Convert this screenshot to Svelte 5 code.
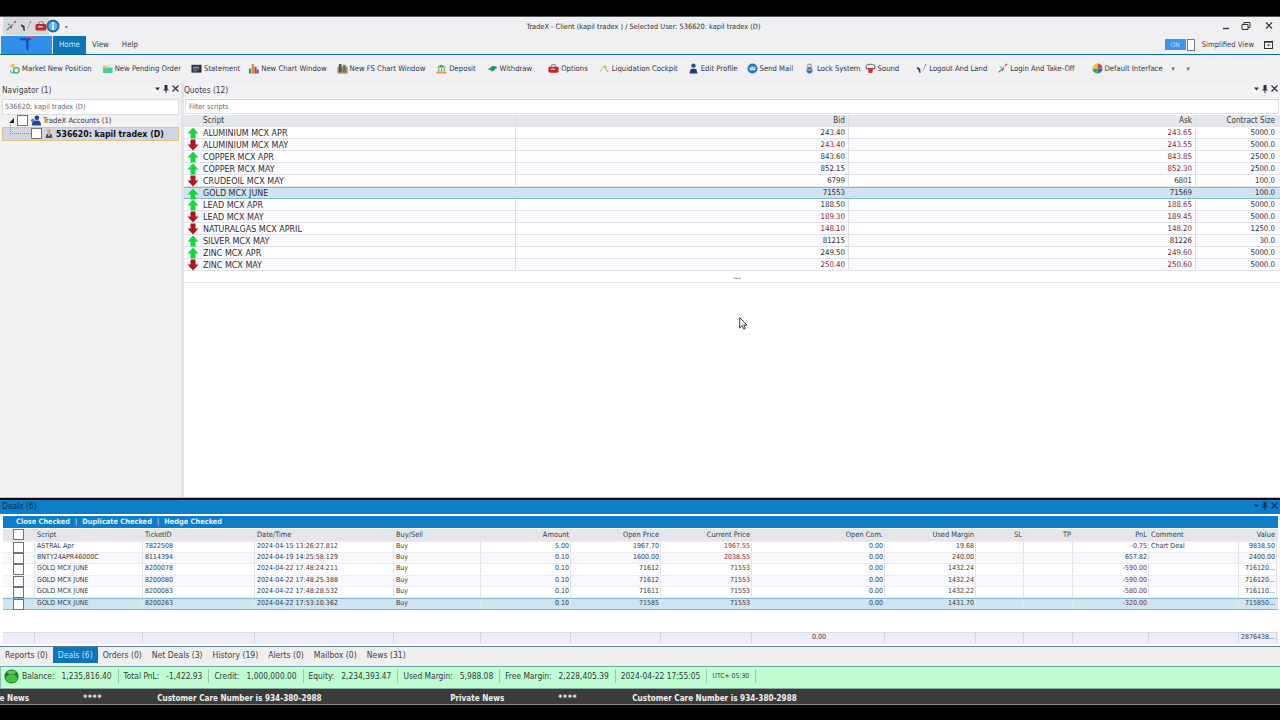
<script>
  const tools = [
    { icon: 'market', label: 'Market New Position', gap: 10 },
    { icon: 'pending', label: 'New Pending Order', gap: 10 },
    { icon: 'statement', label: 'Statement', gap: 8 },
    { icon: 'chart', label: 'New Chart Window', gap: 10 },
    { icon: 'fschart', label: 'New FS Chart Window', gap: 11 },
    { icon: 'deposit', label: 'Deposit', gap: 11 },
    { icon: 'withdraw', label: 'Withdraw', gap: 16 },
    { icon: 'options', label: 'Options', gap: 11 },
    { icon: 'liquid', label: 'Liquidation Cockpit', gap: 10 },
    { icon: 'profile', label: 'Edit Profile', gap: 9 },
    { icon: 'mail', label: 'Send Mail', gap: 11 },
    { icon: 'lock', label: 'Lock System', gap: 4 },
    { icon: 'sound', label: 'Sound', gap: 17 },
    { icon: 'land', label: 'Logout And Land', gap: 10 },
    { icon: 'takeoff', label: 'Login And Take-Off', gap: 17 },
    { icon: 'palette', label: 'Default Interface', gap: 0 }
  ];

  const quotes = [
    { name: 'ALUMINIUM MCX APR', bid: '243.40', ask: '243.65', size: '5000.0', up: true },
    { name: 'ALUMINIUM MCX MAY', bid: '243.40', ask: '243.55', size: '5000.0', up: false, bidRed: true },
    { name: 'COPPER MCX APR', bid: '843.60', ask: '843.85', size: '2500.0', up: true },
    { name: 'COPPER MCX MAY', bid: '852.15', ask: '852.30', size: '2500.0', up: true },
    { name: 'CRUDEOIL MCX MAY', bid: '6799', ask: '6801', size: '100.0', up: false, plain: true },
    { name: 'GOLD MCX JUNE', bid: '71553', ask: '71569', size: '100.0', up: true, plain: true, selected: true },
    { name: 'LEAD MCX APR', bid: '188.50', ask: '188.65', size: '5000.0', up: true },
    { name: 'LEAD MCX MAY', bid: '189.30', ask: '189.45', size: '5000.0', up: false, bidRed: true },
    { name: 'NATURALGAS MCX APRIL', bid: '148.10', ask: '148.20', size: '1250.0', up: false, bidRed: true },
    { name: 'SILVER MCX MAY', bid: '81215', ask: '81226', size: '30.0', up: true, plain: true },
    { name: 'ZINC MCX APR', bid: '249.50', ask: '249.60', size: '5000.0', up: true },
    { name: 'ZINC MCX MAY', bid: '250.40', ask: '250.60', size: '5000.0', up: false, bidRed: true }
  ];

  const dealHead = ['Script', 'TicketID', 'Date/Time', 'Buy/Sell', 'Amount', 'Open Price', 'Current Price', 'Open Com.', 'Used Margin', 'SL', 'TP', 'PnL', 'Comment', 'Value'];
  const alignRight = [false, false, false, false, true, true, true, true, true, true, true, true, false, true];

  const deals = [
    { cells: ['ASTRAL Apr', '7822508', '2024-04-15 13:26:27.812', 'Buy', '5.00', '1967.70', '1967.55', '0.00', '19.68', '', '', '-0.75', 'Chart Deal', '9838.50'], curRed: true },
    { cells: ['BNTY24APR46000C', '8114394', '2024-04-19 14:25:58.129', 'Buy', '0.10', '1600.00', '2038.55', '0.00', '240.00', '', '', '657.82', '', '2400.00'], curRed: true, pnlDark: true },
    { cells: ['GOLD MCX JUNE', '8200078', '2024-04-22 17:48:24.211', 'Buy', '0.10', '71612', '71553', '0.00', '1432.24', '', '', '-590.00', '', '716120...'] },
    { cells: ['GOLD MCX JUNE', '8200080', '2024-04-22 17:48:25.388', 'Buy', '0.10', '71612', '71553', '0.00', '1432.24', '', '', '-590.00', '', '716120...'] },
    { cells: ['GOLD MCX JUNE', '8200083', '2024-04-22 17:48:28.532', 'Buy', '0.10', '71611', '71553', '0.00', '1432.22', '', '', '-580.00', '', '716110...'] },
    { cells: ['GOLD MCX JUNE', '8200263', '2024-04-22 17:53:10.362', 'Buy', '0.10', '71585', '71553', '0.00', '1431.70', '', '', '-320.00', '', '715850...'], selected: true }
  ];

  const tabs = ['Reports (0)', 'Deals (6)', 'Orders (0)', 'Net Deals (3)', 'History (19)', 'Alerts (0)', 'Mailbox (0)', 'News (31)'];

  const stats = [
    ['Balance:', '1,235,816.40'],
    ['Total PnL:', '-1,422.93'],
    ['Credit:', '1,000,000.00'],
    ['Equity:', '2,234,393.47'],
    ['Used Margin:', '5,988.08'],
    ['Free Margin:', '2,228,405.39']
  ];
</script>

{#snippet icon(name)}
  <svg class="ico" viewBox="0 0 12 12" aria-hidden="true">
    {#if name === 'market'}
      <circle cx="4" cy="3" r="2.4" fill="#e8c64a" />
      <path d="M1.5 8a4 4 0 0 0 4 3" fill="none" stroke="#4aa0d8" stroke-width="1.2" />
      <circle cx="8" cy="8" r="3" fill="none" stroke="#35b36a" stroke-width="1.5" />
    {:else if name === 'pending'}
      <rect x="1" y="5" width="10.5" height="6" fill="#3fcfa6" />
      <rect x="1" y="3" width="5" height="3" fill="#e8c64a" />
      <rect x="7" y="1.5" width="2" height="3" fill="#d8d8d8" />
    {:else if name === 'statement'}
      <rect x="0.5" y="2" width="11" height="8.5" fill="#2c3038" />
      <rect x="2" y="4" width="7" height="1" fill="#b8c0c8" />
      <rect x="2" y="6" width="7" height="1" fill="#8a96a2" />
      <rect x="2" y="8" width="5" height="1" fill="#8a96a2" />
    {:else if name === 'chart'}
      <rect x="1" y="6" width="2.4" height="5.5" fill="#3d9a3f" />
      <rect x="4" y="1" width="2.4" height="10.5" fill="#d8842c" />
      <rect x="7" y="4" width="2.4" height="7.5" fill="#c33b35" />
      <rect x="9.6" y="7" width="2" height="4.5" fill="#3569b8" />
    {:else if name === 'fschart'}
      <rect x="0.5" y="4" width="11" height="7.5" fill="#a08b6a" />
      <rect x="2" y="1" width="3" height="9" fill="#5d5a4c" />
      <rect x="6.5" y="2" width="3" height="8" fill="#6f7a5a" />
    {:else if name === 'deposit'}
      <path d="M0.5 5 6 1.5 11 5Z" fill="#3fa650" />
      <rect x="1.5" y="5.5" width="9" height="4" fill="#e8edf0" />
      <path d="M3 5.5v4M6 5.5v4M9 5.5v4" stroke="#5b9a68" />
      <rect x="0.5" y="9.5" width="11" height="2" fill="#d8a23a" />
    {:else if name === 'withdraw'}
      <path d="M1 7 6 3l5 1-4 5Z" fill="#2f9a70" />
      <path d="M5 9l3-4 3 .5" fill="none" stroke="#1f6d55" />
    {:else if name === 'options'}
      <path d="M3.5 4a2.5 2.5 0 0 1 5 0" fill="none" stroke="#8a8f98" stroke-width="1.2" />
      <rect x="0.5" y="4" width="11" height="6.5" rx="1.5" fill="#c4242a" />
      <rect x="3" y="6" width="5" height="1.5" fill="#f3b9b9" />
    {:else if name === 'liquid'}
      <path d="M1 10 5 3" stroke="#e8d27a" stroke-width="1.6" />
      <path d="M5 3l5 7" stroke="#9fd08a" stroke-width="1.6" />
      <path d="M6.8 3l1.5 2" stroke="#e59a4a" stroke-width="1.3" />
    {:else if name === 'profile'}
      <circle cx="6" cy="3" r="2.4" fill="#1f4fa8" />
      <path d="M1.5 11.5 3 6.5h6l1.5 5Z" fill="#173d88" />
      <rect x="4.5" y="5" width="3" height="1.5" fill="#e8b86a" />
    {:else if name === 'mail'}
      <circle cx="6" cy="6" r="5.5" fill="#1f7cc0" />
      <rect x="3" y="4" width="6" height="4" rx="0.6" fill="#e6f2fa" />
      <path d="M3 4.4 6 6.4 9 4.4" fill="none" stroke="#1f7cc0" stroke-width="0.7" />
    {:else if name === 'lock'}
      <circle cx="6" cy="3.2" r="2" fill="none" stroke="#7d8a99" stroke-width="1.1" />
      <circle cx="6" cy="8" r="3.4" fill="#4f6f96" />
      <rect x="3.2" y="7" width="5.6" height="1" fill="#c9d4e0" />
    {:else if name === 'sound'}
      <ellipse cx="6" cy="4" rx="5" ry="2.6" fill="none" stroke="#555" />
      <path d="M3 5.5h6l-1 5.5H4Z" fill="#c83a3a" />
      <path d="M1.5 5v2M10.5 5v2" stroke="#555" />
    {:else if name === 'land'}
      <path d="M1 4l3.5 2 .5 5-1.5-.3-.8-3L1 6Z" fill="#3c4650" />
      <path d="M7.5 9 10.5 2" stroke="#9aa4ae" stroke-width="1" />
      <path d="M10 1.5l1 .5" stroke="#c33b35" stroke-width="1.2" />
    {:else if name === 'takeoff'}
      <path d="M1 10 8 3.5 6.5 9 5 7.5 3 10Z" fill="#5f6b75" />
      <path d="M3 4l2 1" stroke="#3d9a3f" stroke-width="1.1" />
      <path d="M9 3 11 1" stroke="#c33b35" stroke-width="1.3" />
    {:else if name === 'palette'}
      <path d="M6 .5A5.5 5.5 0 0 1 11.5 6H6Z" fill="#e23b3b" />
      <path d="M11.5 6A5.5 5.5 0 0 1 6 11.5V6Z" fill="#2f68c8" />
      <path d="M6 11.5A5.5 5.5 0 0 1 .5 6H6Z" fill="#35a84a" />
      <path d="M.5 6A5.5 5.5 0 0 1 6 .5V6Z" fill="#eec52e" />
    {/if}
  </svg>
{/snippet}

{#snippet panelControls()}
  <span class="panel-controls">
    <svg viewBox="0 0 28 10" width="28" height="10" aria-hidden="true">
      <path d="M2 3.5h5L4.500 6.500Z" fill="currentColor" />
      <path d="M11.500 1h3v4.500h1.200v1h-2.200V9h-1V6.500h-2.200v-1h1.200Z" fill="currentColor" />
      <path d="M19.500 1.500l6 6m0-6-6 6" stroke="currentColor" stroke-width="1.200" />
    </svg>
  </span>
{/snippet}

{#snippet arrow(up)}
  <svg class="arrow" viewBox="0 0 12 12" aria-hidden="true">
    {#if up}
      <path d="M6 .5 11.5 6.5H8.5V11.5H3.5V6.5H.5Z" fill="#14d83c" />
    {:else}
      <path d="M6 11.5 .5 5.5H3.5V.5H8.5V5.5H11.5Z" fill="#b4141e" />
    {/if}
  </svg>
{/snippet}

<div class="screen">
  <div class="letterbox-top"></div>

  <header class="titlebar">
    <div class="qat">
      <span class="qat-group">
        {@render icon('takeoff')}
        {@render icon('land')}
        {@render icon('options')}
      </span>
      <svg class="info" viewBox="0 0 14 14" aria-hidden="true">
        <circle cx="7" cy="7" r="6.5" fill="#1569b8" />
        <circle cx="7" cy="7" r="4.6" fill="#5db0ea" />
        <rect x="6" y="5.6" width="2" height="5" fill="#fff" />
        <rect x="6" y="3.2" width="2" height="1.6" fill="#fff" />
      </svg>
      <span class="qat-more">▾</span>
    </div>
    <div class="title">TradeX - Client (kapil tradex ) / Selected User: 536620: kapil tradex (D)</div>
    <div class="window-buttons">
      <svg viewBox="0 0 52 10" width="52" height="10" aria-hidden="true">
        <path d="M0 7.5h6" stroke="#333" stroke-width="1.4" />
        <path d="M19 3.500h6v5h-6Z M21 3.500V1.500h6v5h-2" fill="none" stroke="#333" />
        <path d="M43 1.500l6 6m0-6-6 6" stroke="#333" stroke-width="1.200" />
      </svg>
    </div>
  </header>

  <nav class="ribbon-tabs">
    <div class="logo">
      <svg viewBox="0 0 51 16" width="51" height="16" aria-hidden="true">
        <path d="M18 2h13c-.5 1.500-1.500 2.500-3.500 2.500V15c-1.500-.5-2.500-2-2.500-4V4.500h-3.500C20 4.500 18.500 3.500 18 2Z" fill="#1551c4" />
        <path d="M27.500 0h6l-3 4Z" fill="#d8505e" />
      </svg>
    </div>
    <span class="tab-home">Home</span>
    <span class="tab-link">View</span>
    <span class="tab-link">Help</span>
    <div class="ribbon-right">
      <span class="toggle-on">ON</span>
      <span class="toggle-box"></span>
      <span class="simplified">Simplified View</span>
      <svg viewBox="0 0 10 10" width="10" height="10" aria-hidden="true">
        <rect x="0.500" y="1.500" width="8" height="7" fill="none" stroke="#333" />
        <path d="M.500 2h8" stroke="#333" stroke-width="1.400" />
        <path d="M3 4.500h3L4.500 6.500Z" fill="#333" />
      </svg>
    </div>
  </nav>

  <div class="toolbar">
    {#each tools as tool}
      <span class="tool" style="margin-right: {tool.gap}px">
        {@render icon(tool.icon)}
        <span>{tool.label}</span>
      </span>
    {/each}
    <span class="tool-caret first">▾</span>
    <span class="tool-caret">▾</span>
  </div>

  <main class="workspace">
    <aside class="navigator">
      <div class="panel-head">
        <span>Navigator (1)</span>
        {@render panelControls()}
      </div>
      <div class="nav-search">536620: kapil tradex (D)</div>
      <div class="tree-row">
        <span class="tree-toggle"></span>
        <span class="check"></span>
        <svg class="tree-icon" viewBox="0 0 12 12" aria-hidden="true">
          <circle cx="7.500" cy="3" r="2.500" fill="#1f3f94" />
          <path d="M2 11.500c0-4 2-5.500 5.500-5.500s4.500 2 4.500 5.500Z" fill="#23479e" />
          <circle cx="3" cy="6" r="1.800" fill="#3d7cc8" />
        </svg>
        <span>TradeX Accounts (1)</span>
      </div>
      <div class="tree-row selected">
        <span class="check"></span>
        <svg class="tree-icon" viewBox="0 0 12 12" aria-hidden="true">
          <circle cx="6" cy="3" r="2.500" fill="#d8a678" />
          <path d="M2 11.500c0-4 1.500-5.500 4-5.500s4 1.500 4 5.500Z" fill="#4a4f58" />
          <rect x="5.300" y="6" width="1.400" height="3" fill="#eee" />
        </svg>
        <span>536620: kapil tradex (D)</span>
      </div>
    </aside>

    <section class="quotes">
      <div class="panel-head">
        <span>Quotes (12)</span>
        {@render panelControls()}
      </div>
      <div class="filter">Filter scripts</div>
      <div class="q-row q-head">
        <span></span>
        <span>Script</span>
        <span class="num">Bid</span>
        <span class="num">Ask</span>
        <span class="num">Contract Size</span>
      </div>
      {#each quotes as quote, i}
        <div class="q-row" class:alt={i % 2 === 1} class:sel={quote.selected}>
          <span class="arrow-cell">{@render arrow(quote.up)}</span>
          <span class="q-name">{quote.name}</span>
          <span class="num" class:red={quote.bidRed}>{quote.bid}</span>
          <span class="num" class:red={!quote.plain}>{quote.ask}</span>
          <span class="num">{quote.size}</span>
        </div>
      {/each}
      <div class="more-dots">•••</div>
    </section>

    <svg class="cursor" viewBox="0 0 9 13" width="9" height="13" aria-hidden="true">
      <path d="M.7.700v10.200l2.500-2.300 1.700 3.500 1.500-.7-1.600-3.400h3.200Z" fill="#fff" stroke="#222" stroke-width=".9" />
    </svg>
  </main>

  <section class="deals">
    <div class="deals-title">
      <span>Deals (6)</span>
      {@render panelControls()}
    </div>
    <div class="deals-actions">
      <span>Close Checked</span><i>|</i><span>Duplicate Checked</span><i>|</i><span>Hedge Checked</span>
    </div>
    <div class="d-row d-head">
      <span class="check-cell"><span class="check"></span></span>
      {#each dealHead as text, i}
        <span class:num={alignRight[i]}>{text}</span>
      {/each}
    </div>
    {#each deals as deal, r}
      <div class="d-row" class:alt={r % 2 === 1} class:sel={deal.selected}>
        <span class="check-cell"><span class="check"></span></span>
        {#each deal.cells as text, i}
          <span
            class:num={alignRight[i]}
            class:red={(i === 6 && deal.curRed) || (i === 11 && !deal.pnlDark)}
          >{text}</span>
        {/each}
      </div>
    {/each}
    <div class="d-spacer"></div>
    <div class="d-row d-foot">
      <span></span>
      {#each dealHead as _, i}
        <span class:center={i === 7}>{i === 7 ? '0.00' : i === 13 ? '2876438...' : ''}</span>
      {/each}
    </div>
  </section>

  <div class="bottom-tabs">
    {#each tabs as tab, i}
      <span class="bottom-tab" class:active={i === 1}>{tab}</span>
    {/each}
  </div>

  <div class="statusbar">
    <svg class="orb" viewBox="0 0 16 16" aria-hidden="true">
      <circle cx="8" cy="8" r="7.500" fill="#1d7a2a" />
      <ellipse cx="8" cy="10" rx="6" ry="4.500" fill="#3fc23f" />
      <ellipse cx="8" cy="3.500" rx="4.500" ry="2" fill="#9adf9a" opacity=".6" />
    </svg>
    {#each stats as stat}
      <span class="stat"><span>{stat[0]}</span><span>{stat[1]}</span></span>
    {/each}
    <span class="stat">2024-04-22 17:55:05</span>
    <span class="stat utc">UTC+ 05:30</span>
  </div>

  <div class="ticker">
    <div class="ticker-track">
      {#each [0, 1] as _}
        <span class="t-news">Private News</span>
        <span class="t-stars">****</span>
        <span class="t-care">Customer Care Number is 934-380-2988</span>
      {/each}
    </div>
  </div>
</div>

<style>
  :global(body) {
    margin: 0;
    background: #000;
  }

  .screen {
    display: flex;
    flex-direction: column;
    width: 1280px;
    height: 720px;
    overflow: hidden;
    background: #000;
    color: #2a2a2e;
    font-family: "DejaVu Sans", "Noto Sans", sans-serif;
    font-stretch: condensed;
    font-size: 7.5px;
  }

  .letterbox-top {
    flex: 0 0 16px;
    background: #000;
  }

  .titlebar {
    position: relative;
    display: flex;
    flex: 0 0 20px;
    align-items: center;
    justify-content: center;
    box-sizing: border-box;
    padding: 0 0 1px 7px;
    background: #f0f0f3;
    border-top: 1px solid #55585c;
  }

  .qat {
    position: absolute;
    left: 3px;
    top: 0;
    display: flex;
    align-items: center;
  }

  .qat-group {
    display: flex;
    gap: 3px;
    padding: 3px 2px;
    background: #d9d9dd;
  }

  .qat-group .ico {
    width: 12px;
    height: 12px;
  }

  .info {
    width: 14px;
    height: 14px;
    margin-left: -3px;
  }

  .qat-more {
    margin-left: 5px;
    color: #777;
    font-size: 6px;
  }

  .title {
    font-size: 7.35px;
    color: #333;
  }

  .window-buttons {
    position: absolute;
    right: 5px;
    top: 4px;
  }

  .ribbon-tabs {
    display: flex;
    flex: 0 0 17.500px;
    align-items: stretch;
    box-sizing: border-box;
    padding-left: 1px;
    background: #f0f0f3;
    border-bottom: 1.500px solid #0d6c8e;
    font-size: 7.900px;
  }

  .logo {
    width: 51px;
    margin-right: 1px;
    overflow: hidden;
    background: #2f8fe8;
  }

  .tab-home {
    display: flex;
    align-items: center;
    justify-content: center;
    width: 33px;
    padding-bottom: 1px;
    background: #0d75b8;
    color: #d5e8f5;
  }

  .tab-link {
    display: flex;
    align-items: center;
    margin-left: 6px;
    margin-right: 7px;
    padding-bottom: 1px;
    color: #3a3d42;
  }

  .ribbon-right {
    display: flex;
    align-items: center;
    margin-left: auto;
    padding: 0 6px 1px 0;
  }

  .toggle-on {
    display: flex;
    align-items: center;
    justify-content: center;
    width: 21px;
    height: 11px;
    background: #3c96ee;
    color: #bcdcf8;
    font-size: 6.500px;
  }

  .toggle-box {
    width: 6px;
    height: 10px;
    margin: 0 7px 0 1px;
    border: 1px solid #777;
    background: #fff;
  }

  .simplified {
    margin-right: 10px;
    color: #3a3d42;
    font-size: 7.600px;
  }

  .toolbar {
    display: flex;
    flex: 0 0 27.500px;
    align-items: center;
    box-sizing: border-box;
    padding-left: 9px;
    background: #f0f0f3;
    font-size: 7.650px;
  }

  .tool {
    display: flex;
    align-items: center;
    gap: 2px;
    color: #33363b;
    white-space: nowrap;
  }

  .ico {
    flex: none;
    width: 11px;
    height: 11px;
  }

  .tool-caret {
    width: 15px;
    color: #666;
    font-size: 7px;
    text-align: center;
  }

  .tool-caret.first {
    margin-left: 3px;
  }

  .workspace {
    position: relative;
    display: flex;
    flex: 0 0 415px;
    gap: 3px;
    box-sizing: border-box;
    background: #e4e4e7;
    border-bottom: 1px solid #c8c8cc;
  }

  .navigator {
    flex: 0 0 181px;
    box-sizing: border-box;
    padding: 0 2px;
    background: #f2f2f4;
  }

  .quotes {
    flex: 1;
    min-width: 0;
    background: #fff;
  }

  .panel-head {
    position: relative;
    display: flex;
    align-items: center;
    box-sizing: border-box;
    height: 15px;
    padding-bottom: 1px;
    background: #f2f2f4;
    color: #3a3d42;
    font-size: 8.300px;
  }

  .navigator .panel-head {
    margin: 0 -2px;
    padding-left: 2px;
  }

  .panel-controls {
    position: absolute;
    right: 0;
    top: 1px;
    color: #2f3236;
  }

  .nav-search {
    display: flex;
    align-items: center;
    box-sizing: border-box;
    height: 16px;
    margin-top: 1px;
    padding-left: 2px;
    border: 1px solid #dcdcdf;
    background: #fff;
    color: #666a70;
    font-size: 7.300px;
  }

  .tree-row {
    position: relative;
    display: flex;
    align-items: center;
    height: 12px;
    gap: 2px;
    padding-left: 7px;
    color: #333;
    font-size: 7.600px;
  }

  .tree-toggle {
    width: 0;
    height: 0;
    margin-right: 1px;
    border-style: solid;
    border-width: 0 0 5px 5px;
    border-color: transparent transparent #222 transparent;
  }

  .tree-row.selected {
    box-sizing: border-box;
    height: 14px;
    padding-left: 28px;
    border: 1px solid #e3c47e;
    background: #d2d4e4;
    color: #111;
    font-size: 8.700px;
    font-weight: 700;
  }

  .tree-row.selected::before {
    content: "";
    position: absolute;
    left: 7px;
    top: -3px;
    width: 20px;
    height: 8px;
    border-left: 1px dotted #888;
    border-bottom: 1px dotted #888;
  }

  .tree-icon {
    flex: none;
    width: 11px;
    height: 11px;
  }

  .tree-row.selected .tree-icon {
    width: 10px;
  }

  .check {
    display: inline-block;
    flex: none;
    box-sizing: border-box;
    width: 11px;
    height: 11px;
    border: 1px solid #6f7377;
    background: #fff;
  }

  .filter {
    display: flex;
    align-items: center;
    box-sizing: border-box;
    height: 15px;
    margin: 1px;
    padding-left: 3px;
    border: 1px solid #e0e0e3;
    border-top-color: #cfcfd2;
    color: #5c5f64;
    font-size: 7.200px;
  }

  .q-row {
    display: grid;
    grid-template-columns: 16px 315px 333px 347px 83px;
    align-items: center;
    box-sizing: border-box;
    height: 12px;
    border-bottom: 1px solid #dfe2e9;
    color: #2c2c30;
    font-size: 7.800px;
    white-space: nowrap;
  }

  .q-row > span {
    display: block;
    box-sizing: border-box;
    height: 11px;
    border-left: 1px solid transparent;
    line-height: 11px;
  }

  .q-row > span:nth-child(3),
  .q-row > span:nth-child(4),
  .q-row > span:nth-child(5) {
    border-left-color: #dcdfe6;
  }

  .q-row .q-name {
    padding-left: 2px;
    font-size: 8.900px;
    line-height: 12px;
  }

  .q-head {
    background: #e5e7eb;
    color: #3a3d42;
    font-size: 8.100px;
  }

  .q-head > span:nth-child(2) {
    padding-left: 2px;
  }

  .q-row.alt {
    background: #fbfbff;
  }

  .q-row.sel {
    background: #cfe4f2;
    border-top: 1px solid #86b8d2;
    border-bottom: 1px solid #86b8d2;
  }

  .q-row.sel > span {
    height: 10px;
    line-height: 10px;
  }

  .q-row.sel .q-name {
    line-height: 11px;
  }

  .num {
    padding-right: 3px;
    text-align: right;
  }

  .red {
    color: #7d1f35;
  }

  .arrow-cell {
    position: relative;
  }

  .arrow {
    position: absolute;
    left: 2px;
    top: 0;
    width: 12px;
    height: 12px;
  }

  .more-dots {
    box-sizing: border-box;
    height: 12px;
    padding-left: 10px;
    border-bottom: 1px solid #e2e2e6;
    color: #444;
    font-size: 4.500px;
    line-height: 15px;
    text-align: center;
  }

  .cursor {
    position: absolute;
    left: 739px;
    top: 234px;
  }

  .deals {
    display: flex;
    flex: 0 0 146.500px;
    flex-direction: column;
    box-sizing: border-box;
    margin-top: 2px;
    padding: 0 2px 0 3px;
    background: #fff;
  }

  .deals-title {
    position: relative;
    display: flex;
    flex: 0 0 14px;
    align-items: center;
    box-sizing: border-box;
    margin: 0 -2px 2px -3px;
    padding: 0 0 1px 2px;
    background: #0c7dca;
    color: #06304f;
    font-size: 8.500px;
  }

  .deals-title .panel-controls {
    color: #0b3656;
  }

  .deals-actions {
    display: flex;
    flex: 0 0 12px;
    align-items: center;
    gap: 5px;
    box-sizing: border-box;
    margin-bottom: 1px;
    padding: 0 0 1px 13px;
    background: #0c7dca;
    color: #e4f1fb;
    font-size: 7.400px;
    font-weight: 700;
  }

  .deals-actions i {
    font-style: normal;
    font-weight: 400;
  }

  .d-row {
    display: grid;
    grid-template-columns: 32px 108px 112px 139px 87px 90px 90px 91px 133px 91px 48px 49px 76px 90px 38px;
    flex: 0 0 11.350px;
    align-items: center;
    box-sizing: border-box;
    border-bottom: 1px solid #eceef3;
    color: #35373b;
    font-size: 7px;
    white-space: nowrap;
  }

  .d-row > span {
    height: 100%;
    box-sizing: border-box;
    padding-left: 2px;
    overflow: hidden;
    border-right: 1px solid #e2e4ea;
    line-height: 9.500px;
  }

  .d-row > span.num {
    padding-right: 1px;
    padding-left: 0;
  }

  .d-head {
    flex-basis: 13px;
    background: #e4e6ea;
    color: #3b3d42;
    font-size: 7.400px;
  }

  .d-row.d-head > span {
    line-height: 11px;
  }

  .d-row.alt {
    background: #f9f9fd;
  }

  .d-row.sel {
    background: #cfe4f2;
    border-top: 1px solid #86b8d2;
    border-bottom: 1px solid #86b8d2;
  }

  .d-row.sel > span {
    line-height: 8.600px;
  }

  .check-cell {
    position: relative;
    overflow: visible !important;
  }

  .check-cell .check {
    position: absolute;
    left: 10px;
    top: 0;
  }

  .d-spacer {
    flex: 0 0 22px;
  }

  .d-row.d-foot {
    flex-basis: 12px;
    background: #ededfb;
    border-top: 1px solid #dcdce6;
    color: #3a3a3f;
  }

  .d-foot > span {
    border-right-color: #d5d5e0;
  }

  .center {
    text-align: center;
  }

  .bottom-tabs {
    display: flex;
    flex: 0 0 19.500px;
    align-items: stretch;
    box-sizing: border-box;
    padding-bottom: 3px;
    background: #efeff0;
    border-top: 1.500px solid #5b8496;
    color: #3a3d42;
    font-size: 8.550px;
  }

  .bottom-tab {
    display: flex;
    align-items: center;
    padding: 0 5px;
    white-space: nowrap;
  }

  .bottom-tab.active {
    background: #0d75c0;
    color: #bfe0f6;
  }

  .statusbar {
    display: flex;
    flex: 0 0 23px;
    align-items: center;
    box-sizing: border-box;
    padding: 0 0 2px 3px;
    background: #c1fdd3;
    border-top: 1px solid #6fa5a8;
    border-bottom: 1px solid #7fb0a0;
    border-left: 1px solid #8fc0b0;
    color: #33383a;
    font-size: 8.350px;
    white-space: nowrap;
  }

  .orb {
    flex: none;
    width: 15px;
    height: 15px;
    margin-right: 3px;
  }

  .stat {
    display: flex;
    align-items: center;
    gap: 7px;
    height: 14px;
    margin-right: 5px;
    padding-right: 6px;
    border-right: 1px solid #9cc7ac;
  }

  .utc {
    font-size: 6.800px;
  }

  .ticker {
    flex: 0 0 16px;
    box-sizing: border-box;
    padding-top: 3px;
    overflow: hidden;
    background: #3b3b3b;
    border-bottom: 1px solid #8a8a8a;
    color: #f1f1f1;
    font-size: 8.100px;
    font-weight: 700;
  }

  .ticker-track {
    display: flex;
    align-items: center;
    height: 12px;
    margin-left: -25px;
    white-space: nowrap;
  }

  .t-news {
    flex: 0 0 53px;
    margin-right: 54px;
  }

  .t-stars {
    flex: 0 0 20px;
    margin-right: 54px;
    letter-spacing: 1px;
  }

  .t-care {
    flex: 0 0 165px;
    margin-right: 128px;
  }
</style>
